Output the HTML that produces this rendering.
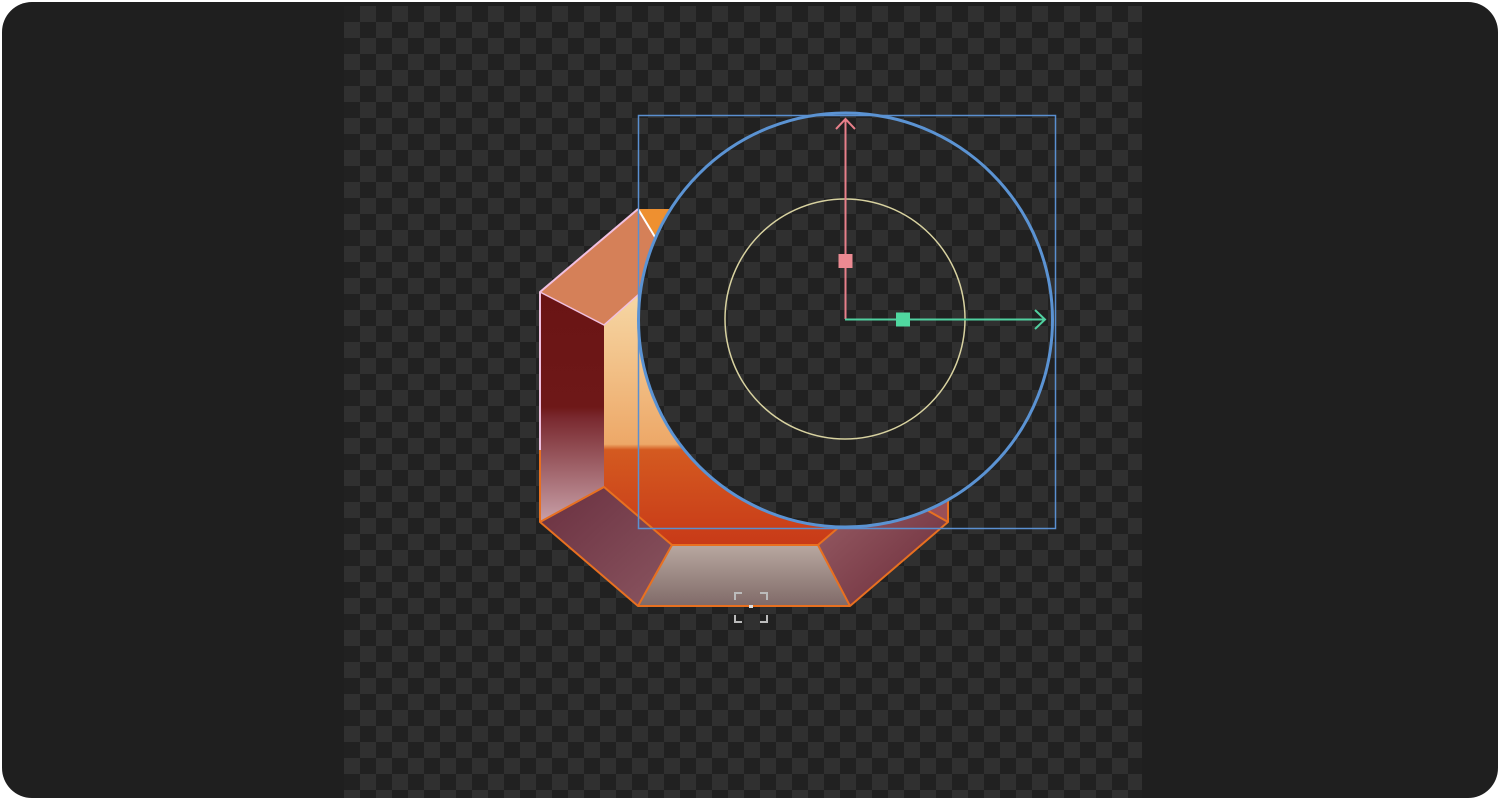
<!DOCTYPE html>
<html><head><style>
html,body{margin:0;padding:0;background:#fff;}
body{width:1500px;height:800px;position:relative;overflow:hidden;font-family:"Liberation Sans",sans-serif;}
.panel{position:absolute;left:2px;top:2px;width:1496px;height:796px;background:#1f1f1f;border-radius:30px;overflow:hidden;}
.checker{position:absolute;left:342px;top:4px;width:798px;height:800px;
background-color:#212121;
background-image:linear-gradient(45deg,#303030 25%,transparent 25%,transparent 75%,#303030 75%),linear-gradient(45deg,#303030 25%,transparent 25%,transparent 75%,#303030 75%);
background-size:32px 32px;background-position:0 0,16px 16px;}
svg{position:absolute;left:0;top:0;}
</style></head><body>
<div class="panel"><div class="checker"></div></div>
<svg width="1500" height="800" viewBox="0 0 1500 800">
<defs>
<mask id="m"><rect width="1500" height="800" fill="#fff"/><circle cx="845.5" cy="320" r="207" fill="#000"/></mask>
<linearGradient id="left" x1="0" y1="0" x2="0" y2="1"><stop offset="0" stop-color="#6a1414"/><stop offset="0.5" stop-color="#6e1818"/><stop offset="0.55" stop-color="#7a2a30"/><stop offset="1" stop-color="#c8a0a8"/></linearGradient>
<linearGradient id="table" x1="0" y1="0" x2="0" y2="1"><stop offset="0" stop-color="#f8e0b0"/><stop offset="0.64" stop-color="#eda868"/><stop offset="0.66" stop-color="#d45a20"/><stop offset="1" stop-color="#c83a18"/></linearGradient>
<linearGradient id="bot" x1="0" y1="0" x2="0" y2="1"><stop offset="0" stop-color="#b8a8a0"/><stop offset="1" stop-color="#806a68"/></linearGradient>
<linearGradient id="bl" x1="0" y1="0" x2="1" y2="1"><stop offset="0" stop-color="#6a3040"/><stop offset="1" stop-color="#8a5560"/></linearGradient>
<linearGradient id="br" x1="1" y1="1" x2="0" y2="0"><stop offset="0" stop-color="#6a2a38"/><stop offset="1" stop-color="#9a6068"/></linearGradient>
</defs>
<g mask="url(#m)" stroke-linejoin="round">
<polygon points="638,209 850,209 948,292 948,522 850,606 638,606 540,522 540,292" fill="#d07050"/>
<polygon points="604,325 672,265 818,265 886,325 886,487 818,545 672,545 604,487" fill="url(#table)"/>
<polygon points="540,292 604,325 604,487 540,522" fill="url(#left)"/>
<polygon points="540,292 638,209 672,265 604,325" fill="#d58058"/>
<polygon points="638,209 850,209 818,265 672,265" fill="#ee9030"/>
<polygon points="540,522 604,487 672,545 638,606" fill="url(#bl)"/>
<polygon points="672,545 818,545 850,606 638,606" fill="url(#bot)"/>
<polygon points="818,545 886,487 948,522 850,606" fill="url(#br)"/>
<polygon points="886,325 948,292 948,522 886,487" fill="#9a5058"/>
<polyline points="638,209 540,292 540,450" fill="none" stroke="#f0c0e0" stroke-width="2"/>
<polyline points="540,450 540,522 638,606 850,606 948,522 948,490" fill="none" stroke="#e87020" stroke-width="2"/>
<polyline points="540,522 604,487 672,545 638,606" fill="none" stroke="#e87020" stroke-width="2"/>
<polyline points="672,545 818,545 850,606" fill="none" stroke="#e87020" stroke-width="2"/>
<polyline points="818,545 886,487 948,522" fill="none" stroke="#e87020" stroke-width="2"/>
<polyline points="540,292 604,325 672,265" fill="none" stroke="#f0c0e0" stroke-width="1.5"/>
<line x1="638" y1="209" x2="672" y2="265" stroke="#fff" stroke-width="2"/>
</g>
<rect x="638.5" y="115.5" width="417" height="413" fill="none" stroke="#5a8fd0" stroke-width="1.5"/>
<circle cx="845.5" cy="320" r="207" fill="none" stroke="#5b93d3" stroke-width="3"/>
<circle cx="845" cy="319" r="120" fill="none" stroke="#d8d2a0" stroke-width="1.5"/>
<line x1="845.5" y1="319" x2="845.5" y2="119" stroke="#e8808a" stroke-width="2"/>
<polyline points="836,129 845.5,119 855,129" fill="none" stroke="#e8808a" stroke-width="2"/>
<rect x="838.5" y="254" width="14" height="14" fill="#ec8a92"/>
<line x1="845" y1="319.5" x2="1045" y2="319.5" stroke="#50d0a0" stroke-width="2"/>
<polyline points="1035,310 1045,319.5 1035,329" fill="none" stroke="#50d0a0" stroke-width="2"/>
<rect x="896" y="312.5" width="14" height="14" fill="#50d8a0"/>
<g fill="none" stroke="#bbb" stroke-width="2">
<polyline points="735,600 735,593 742,593"/><polyline points="760,593 767,593 767,600"/>
<polyline points="735,615 735,622 742,622"/><polyline points="760,622 767,622 767,615"/>
</g>
<rect x="749" y="605" width="4" height="3" fill="#ddd"/>
</svg>
</body></html>
